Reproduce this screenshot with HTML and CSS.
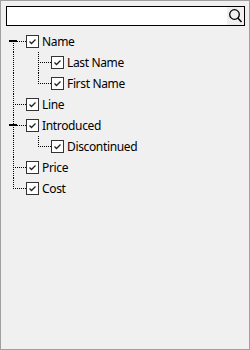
FILE: index.html
```html
<!DOCTYPE html>
<html>
<head>
<meta charset="utf-8">
<link rel="stylesheet" href="styles.css">
</head>
<body>
<div class="panel">
  <div class="search">
    <input class="search-input" type="text">
    <span class="search-btn">
      <svg width="15" height="16" viewBox="0 0 15 16"><circle cx="6.5" cy="6.5" r="4.8" fill="none" stroke="#000" stroke-width="1.3"/><line x1="9.8" y1="10" x2="13.5" y2="14" stroke="#000" stroke-width="1.5"/></svg>
    </span>
  </div>
  <ul class="tree">
    <li class="row"><span class="g first-minus"></span><span class="cb"><svg viewBox="0 0 11 11"><polyline points="2.5,5.5 4.5,7.5 8.5,3.5"/></svg></span><span class="label">Name</span></li>
    <li class="row"><span class="g pipe"></span><span class="g tee"></span><span class="cb"><svg viewBox="0 0 11 11"><polyline points="2.5,5.5 4.5,7.5 8.5,3.5"/></svg></span><span class="label">Last Name</span></li>
    <li class="row"><span class="g pipe"></span><span class="g elbow"></span><span class="cb"><svg viewBox="0 0 11 11"><polyline points="2.5,5.5 4.5,7.5 8.5,3.5"/></svg></span><span class="label">First Name</span></li>
    <li class="row"><span class="g tee"></span><span class="cb"><svg viewBox="0 0 11 11"><polyline points="2.5,5.5 4.5,7.5 8.5,3.5"/></svg></span><span class="label">Line</span></li>
    <li class="row"><span class="g tee-minus"></span><span class="cb"><svg viewBox="0 0 11 11"><polyline points="2.5,5.5 4.5,7.5 8.5,3.5"/></svg></span><span class="label">Introduced</span></li>
    <li class="row"><span class="g pipe"></span><span class="g elbow"></span><span class="cb"><svg viewBox="0 0 11 11"><polyline points="2.5,5.5 4.5,7.5 8.5,3.5"/></svg></span><span class="label">Discontinued</span></li>
    <li class="row"><span class="g tee"></span><span class="cb"><svg viewBox="0 0 11 11"><polyline points="2.5,5.5 4.5,7.5 8.5,3.5"/></svg></span><span class="label">Price</span></li>
    <li class="row"><span class="g elbow"></span><span class="cb"><svg viewBox="0 0 11 11"><polyline points="2.5,5.5 4.5,7.5 8.5,3.5"/></svg></span><span class="label">Cost</span></li>
  </ul>
</div>
</body>
</html>
```
FILE: styles.css
```css
* { box-sizing: border-box; }
html, body { margin: 0; padding: 0; }
body {
  width: 250px;
  height: 350px;
  font-family: "Noto Sans", "Open Sans", sans-serif;
  --v: repeating-linear-gradient(to bottom, #000 0 1px, transparent 1px 2px);
  --h: repeating-linear-gradient(to right, #000 0 1px, transparent 1px 2px);
  --bar: linear-gradient(#000, #000);
}
.panel {
  width: 250px;
  height: 350px;
  border: 1px solid #a0a0a0;
  background: #f0f0f0;
  padding: 5px 4px 0 5px;
}
.search {
  display: flex;
  height: 20px;
  border: 1px solid #000;
  background: #fff;
}
.search-input {
  flex: 1;
  min-width: 0;
  border: 0;
  outline: 0;
  padding: 0 2px;
  font: inherit;
  font-size: 12px;
  background: transparent;
}
.search-btn {
  width: 17px;
  background: #f0f0f0;
  display: flex;
  align-items: center;
  justify-content: center;
}
.search-btn svg { display: block; }
.tree {
  list-style: none;
  margin: 5px 0 0 -5px;
  padding: 0;
}
.row {
  display: flex;
  align-items: center;
  height: 21px;
}
.g {
  flex: none;
  width: 25px;
  height: 21px;
}
.pipe { background: var(--v) 12px 0 / 1px 100% no-repeat; }
.tee {
  background:
    var(--h) 12px 10px / 13px 1px no-repeat,
    var(--v) 12px 0 / 1px 100% no-repeat;
}
.tee-minus {
  background:
    var(--bar) 8px 9px / 8px 2px no-repeat,
    var(--h) 12px 10px / 13px 1px no-repeat,
    var(--v) 12px 0 / 1px 100% no-repeat;
}
.elbow {
  background:
    var(--h) 12px 10px / 13px 1px no-repeat,
    var(--v) 12px 0 / 1px 11px no-repeat;
}
.first-minus {
  background:
    var(--bar) 8px 9px / 8px 2px no-repeat,
    var(--h) 12px 10px / 13px 1px no-repeat,
    var(--v) 12px 10px / 1px 11px no-repeat;
}
.cb {
  flex: none;
  width: 13px;
  height: 13px;
  border: 1px solid #333;
  background: #fff;
  display: flex;
}
.cb svg {
  width: 11px;
  height: 11px;
  display: block;
}
.cb polyline {
  fill: none;
  stroke: #222;
  stroke-width: 1.3;
}
.label {
  margin-left: 3px;
  font-size: 12px;
  letter-spacing: -0.35px;
  color: #000;
  white-space: nowrap;
}
```
